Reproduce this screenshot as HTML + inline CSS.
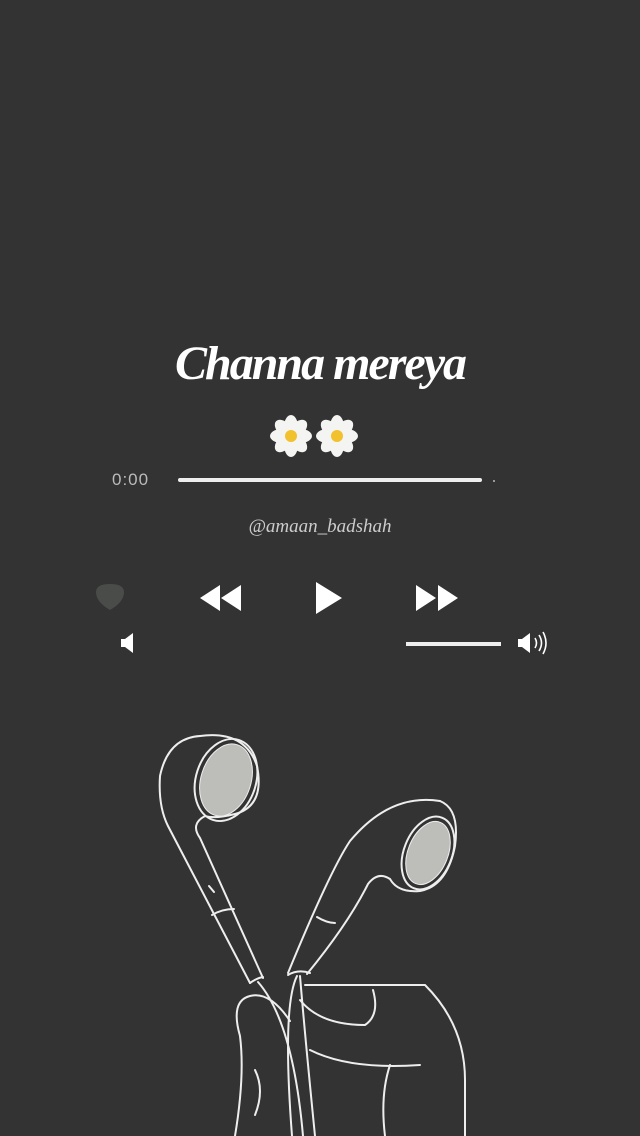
<!DOCTYPE html>
<html><head><meta charset="utf-8"><style>
html,body{margin:0;padding:0;background:#323332;}
body{width:640px;height:1136px;position:relative;overflow:hidden;font-family:"Liberation Sans",sans-serif;}
.t{position:absolute;left:0;width:640px;text-align:center;top:336px;color:#fff;font-family:"Liberation Serif",serif;font-style:italic;font-weight:bold;font-size:48px;letter-spacing:-2px;}
.time{position:absolute;left:112px;top:470px;color:#bbb;font-size:17px;letter-spacing:1px;}
.bar{position:absolute;left:178px;top:478px;width:304px;height:4px;background:#eee;border-radius:2px;}
.dot{position:absolute;left:493px;top:480px;width:2px;height:2px;background:#999;}
.user{position:absolute;left:0;width:640px;top:516px;text-align:center;color:#ccc;font-family:"Liberation Serif",serif;font-style:italic;font-size:19px;}
.vbar{position:absolute;left:406px;top:642px;width:95px;height:4px;background:#eee;}
</style></head><body>
<div class="t">Channa mereya</div>
<svg style="position:absolute;left:268px;top:413px" width="92" height="46" viewBox="0 0 92 46">
<g fill="#f4f4f2">
<g transform="translate(23,23)"><ellipse rx="7" ry="12" cy="-9"/><ellipse rx="7" ry="12" cy="9"/><ellipse rx="12" ry="7" cx="-9"/><ellipse rx="12" ry="7" cx="9"/><ellipse rx="7" ry="12" cy="-9" transform="rotate(45)"/><ellipse rx="7" ry="12" cy="9" transform="rotate(45)"/><ellipse rx="12" ry="7" cx="-9" transform="rotate(45)"/><ellipse rx="12" ry="7" cx="9" transform="rotate(45)"/><circle r="6" fill="#f2c12e"/></g>
<g transform="translate(69,23)"><ellipse rx="7" ry="12" cy="-9"/><ellipse rx="7" ry="12" cy="9"/><ellipse rx="12" ry="7" cx="-9"/><ellipse rx="12" ry="7" cx="9"/><ellipse rx="7" ry="12" cy="-9" transform="rotate(45)"/><ellipse rx="7" ry="12" cy="9" transform="rotate(45)"/><ellipse rx="12" ry="7" cx="-9" transform="rotate(45)"/><ellipse rx="12" ry="7" cx="9" transform="rotate(45)"/><circle r="6" fill="#f2c12e"/></g>
</g></svg>
<div class="time">0:00</div><div class="bar"></div><div class="dot"></div>
<div class="user">@amaan_badshah</div>
<svg style="position:absolute;left:0;top:0" width="640" height="1136">
<path d="M96 592q0-8 14-8q14 0 14 8q0 10-14 18q-14-8-14-18z" fill="#4a4c4a"/>
<g fill="#fff">
<path d="M200 598l20-13v26z M221 598l20-13v26z"/>
<path d="M316 582l26 16-26 16z"/>
<path d="M416 585l20 13-20 13z M438 585l20 13-20 13z"/>
<path d="M121 639h4l8-6v20l-8-6h-4z"/>
<path d="M518 639h4l8-6v20l-8-6h-4z"/>
</g>
<g fill="none" stroke="#fff" stroke-width="1.6"><path d="M535 638q3 5 0 10M539 635q5 8 0 16M543 632q6 11 0 22"/></g>
<g fill="none" stroke="#eee" stroke-width="2" stroke-linecap="round">
<!-- left earbud -->
<path d="M200 736q-32 2-40 40q-2 30 8 50l82 157"/>
<path d="M200 736q45-6 57 30q8 40-22 48q-20 5-30 2q-15 8-5 22l63 140"/>
<ellipse cx="226" cy="780" rx="30" ry="42" transform="rotate(18 226 780)"/>
<ellipse cx="226" cy="780" rx="25" ry="37" transform="rotate(18 226 780)" fill="#bdbdba" stroke-width="1"/>
<path d="M212 915q10-6 22-6"/>
<path d="M250 983q7-5 13-6"/>
<path d="M209 886l5 6"/>
<!-- right earbud -->
<path d="M440 801q-50-8-90 40q-20 30-62 132"/>
<path d="M440 801q20 8 15 45q-8 40-35 45q-22 2-30-12q-12-8-22 5q-20 40-61 90"/>
<ellipse cx="428" cy="853" rx="24" ry="38" transform="rotate(22 428 853)"/>
<ellipse cx="428" cy="853" rx="20" ry="33" transform="rotate(22 428 853)" fill="#bdbdba" stroke-width="1"/>
<path d="M317 917q10 6 18 6"/>
<path d="M288 975q10-6 22-2"/>
<!-- cables -->
<path d="M258 982q35 40 45 154M297 976q-15 30-5 160M300 976q5 60 15 160"/>
<!-- hand -->
<path d="M305 985h120q40 40 40 95v56"/>
<path d="M235 1136q10-60 5-100q-10-35 10-40q20-5 40 25"/>
<path d="M300 1000q20 25 65 25q15-10 8-35"/>
<path d="M310 1050q40 20 110 15"/>
<path d="M390 1065q-10 30-5 71"/>
<path d="M255 1070q10 20 0 45"/>
</g>
</svg>
<div class="vbar"></div>
</body></html>
